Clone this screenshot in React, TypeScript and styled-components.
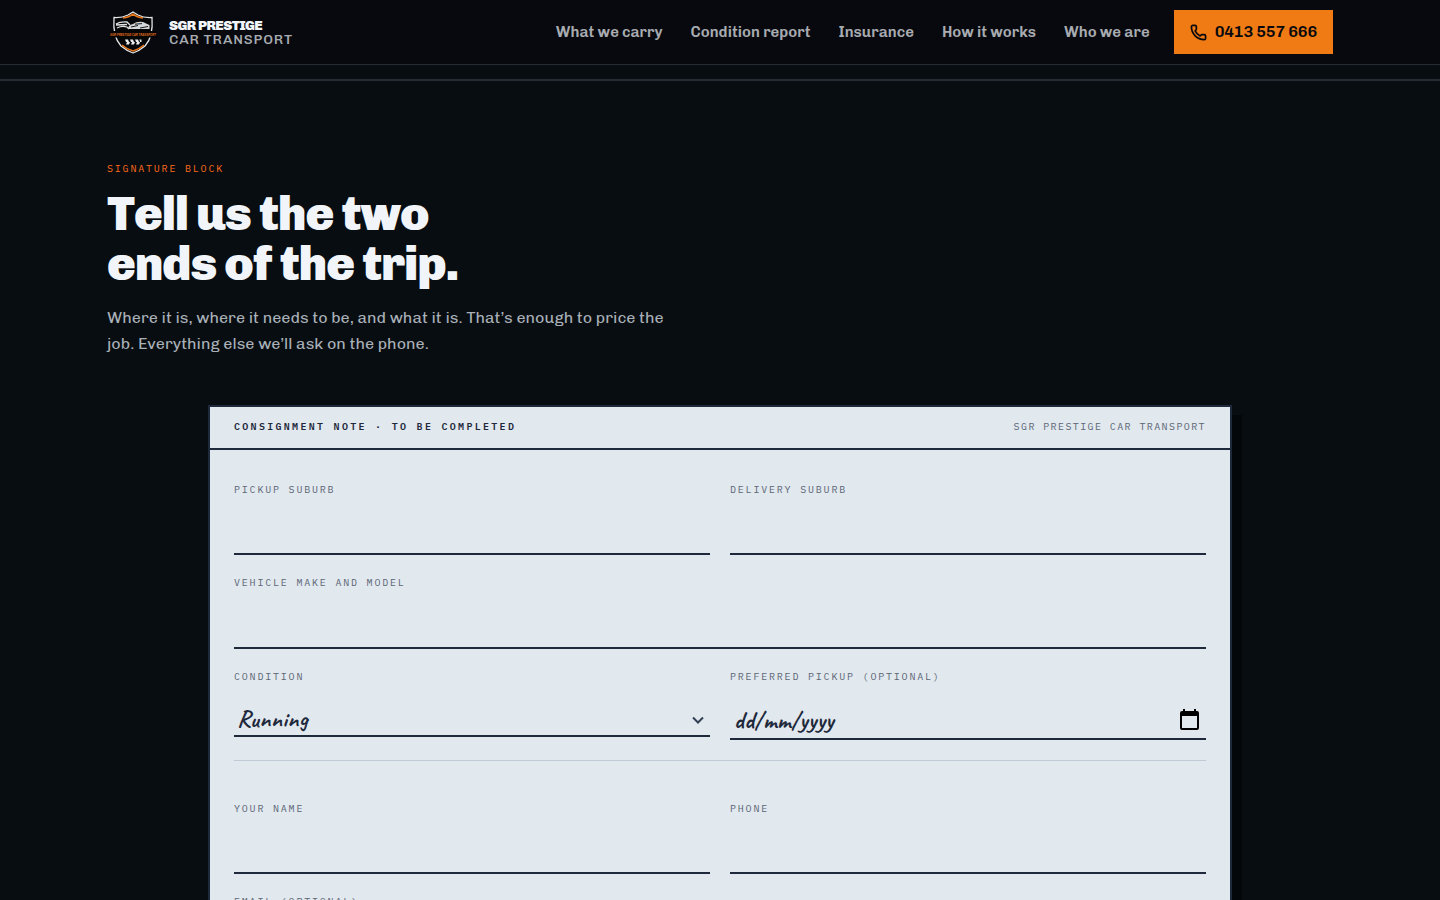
import React from "react";
import styled, { createGlobalStyle, css } from "styled-components";
import { Phone } from "lucide-react";

const colors = {
  ink: "#1e293b",
  header: "#07090e",
  page: "#080d11",
  rule: "#262c34",
  paper: "#e1e8ee",
  orange: "#f07a13",
  light: "#f1f5f9",
  muted: "#a8abb0",
};

const sans = `Chivo, Inter, "Liberation Sans", sans-serif`;
const mono = `"IBM Plex Mono", "Liberation Mono", monospace`;
const hand = `Caveat, Lato, "Liberation Sans", sans-serif`;

const GlobalStyle = createGlobalStyle`
  *, *::before, *::after { box-sizing: border-box; }
  html { scrollbar-width: none; }
  body {
    margin: 0;
    background: ${colors.page};
    color: ${colors.light};
    font-family: ${sans};
    font-size: 16px;
  }
`;

const Page = styled.div`
  min-height: 100vh;
`;

const Header = styled.header`
  position: sticky;
  top: 0;
  z-index: 10;
  background: ${colors.header};
  border-bottom: 1px solid ${colors.rule};
`;

const Container = styled.div`
  width: 100%;
  max-width: 1274px;
  margin: 0 auto;
  padding: 0 24px;
`;

const Bar = styled(Container)`
  display: flex;
  align-items: center;
  justify-content: space-between;
  height: 64px;
`;

const Brand = styled.a`
  display: flex;
  align-items: center;
  gap: 10px;
  text-decoration: none;
`;

const BrandText = styled.span`
  display: flex;
  flex-direction: column;
  padding-top: 1px;
  line-height: 14px;
`;

const BrandName = styled.span`
  color: ${colors.light};
  font-size: 14px;
  font-weight: 900;
  letter-spacing: -0.04em;
`;

const BrandSub = styled.span`
  color: ${colors.muted};
  font-size: 14px;
  font-weight: 500;
  letter-spacing: 0.06em;
`;

const Nav = styled.nav`
  display: flex;
  align-items: center;
  gap: 28px;
`;

const NavLink = styled.a`
  color: ${colors.muted};
  font-size: 15px;
  font-weight: 600;
  text-decoration: none;
`;

const Actions = styled.div`
  display: flex;
  align-items: center;
  gap: 24px;
`;

const CallButton = styled.a`
  display: flex;
  align-items: center;
  gap: 8px;
  height: 44px;
  padding: 0 16px;
  background: ${colors.orange};
  color: ${colors.header};
  font-size: 16px;
  font-weight: 600;
  line-height: 24px;
  letter-spacing: -0.015em;
  text-decoration: none;
`;

const Divider = styled.div`
  height: 16px;
  border-bottom: 2px solid ${colors.rule};
`;

const Section = styled.section`
  padding: 80px 0;
`;

const Eyebrow = styled.p`
  margin: 0;
  color: #ff6a1a;
  font-family: ${mono};
  font-size: 10px;
  line-height: 16px;
  letter-spacing: 0.18em;
  text-transform: uppercase;
`;

const Title = styled.h2`
  margin: 12px 0 0;
  font-size: 48px;
  font-weight: 900;
  line-height: 50px;
  letter-spacing: -0.024em;
`;

const Lead = styled.p`
  margin: 16px 0 0;
  max-width: 580px;
  color: #a9b0b8;
  font-size: 16px;
  line-height: 26px;
`;

const Note = styled.form`
  max-width: 1024px;
  margin: 48px auto 0;
  background: ${colors.paper};
  border: 2px solid ${colors.ink};
  box-shadow: 10px 10px 0 rgba(0, 0, 0, 0.4);
  color: ${colors.ink};
`;

const NoteHeader = styled.div`
  display: flex;
  align-items: center;
  justify-content: space-between;
  height: 43px;
  padding: 0 24px 2px;
  border-bottom: 2px solid ${colors.ink};
  font-family: ${mono};
  font-size: 10px;
`;

const NoteTitle = styled.strong`
  font-weight: 600;
  letter-spacing: 0.23em;
`;

const NoteOwner = styled.span`
  color: #5b6675;
  letter-spacing: 0.14em;
`;

const NoteBody = styled.div`
  padding: 32px 24px;
`;

const Fields = styled.div<{ $ruled?: boolean }>`
  display: grid;
  grid-template-columns: 1fr 1fr;
  gap: 20px;
  align-items: start;
  ${(p) =>
    p.$ruled &&
    css`
      margin-top: 20px;
      padding-top: 40px;
      border-top: 1px solid #bfcad4;
    `}
`;

const Label = styled.label`
  color: #5b6675;
  font-family: ${mono};
  font-size: 10px;
  line-height: 16px;
  letter-spacing: 0.18em;
  text-transform: uppercase;
`;

const control = css`
  width: 100%;
  margin: 0;
  border: 0;
  border-bottom: 2px solid ${colors.ink};
  border-radius: 0;
  background: transparent;
  color: ${colors.ink};
  font-family: ${hand};
  font-size: 24px;
  font-weight: 600;
  letter-spacing: 0.02em;
  outline: none;
`;

const Input = styled.input`
  ${control}
  height: 57px;
  padding: 16px 4px 0;
`;

const Field = styled.div<{ $wide?: boolean }>`
  display: flex;
  flex-direction: column;
  grid-column: ${(p) => (p.$wide ? "1 / -1" : "auto")};

  > ${Input} {
    height: ${(p) => (p.$wide ? 58 : 57)}px;
  }
`;

const ControlWrap = styled.div`
  position: relative;
`;

const Select = styled.select`
  ${control}
  appearance: none;
  display: block;
  height: 52px;
  padding: 18px 32px 0 3px;
`;

const DateInput = styled.input`
  ${control}
  display: block;
  height: 55px;
  padding: 16px 40px 0 4px;

  &::placeholder {
    color: ${colors.ink};
    opacity: 1;
  }
`;

const Chevron = styled.svg`
  position: absolute;
  right: 6px;
  bottom: 11px;
  width: 12px;
  height: 12px;
  pointer-events: none;
`;

const DateButton = styled.button`
  position: absolute;
  right: 6px;
  bottom: 9px;
  display: flex;
  padding: 0;
  border: 0;
  background: none;
`;

const Crest = () => (
  <svg width="52" height="44" viewBox="0 0 52 44" aria-hidden="true">
    <path
      d="M26 2 L31 5 Q37 8 45 7.500 Q46.500 27 38 36 Q32 41 26 43 Q20 41 14 36 Q5.500 27 7 7.500 Q15 8 21 5 Z"
      fill="#050607"
      stroke="#e4e6e8"
      strokeWidth="1.300"
    />
    <path d="M16 8 Q22 7.500 26 4.200 Q30 7.500 36 8" fill="none" stroke="#e87618" strokeWidth="1.500" />
    <path d="M15 35 Q20 39.500 26 41 Q32 39.500 37 35" fill="none" stroke="#e87618" strokeWidth="1.600" />
    <path
      d="M9 14 Q13 11.500 20 12 L23 15 M9 15 L20 14.500 M10 18 Q15 15.500 20 17 L22 19"
      fill="none"
      stroke="#dfe1e3"
      strokeWidth="1.300"
    />
    <path d="M21 19 Q21 15 26 14 Q30 11 36 12 Q40 14 42.500 15 L42.500 19 Z" fill="#d4d7da" />
    <path d="M24 17 L31 15.500 M28 14.200 L35 13.600 M33 18 L41 16.500" stroke="#15181b" strokeWidth="1" />
    <rect x="2" y="21" width="48" height="6.500" rx="1" fill="#050607" />
    <text
      x="26"
      y="25.500"
      textAnchor="middle"
      fill="#e56f1b"
      fontFamily="Liberation Sans Narrow, Liberation Sans, sans-serif"
      fontSize="2.800"
      fontWeight="700"
      fontStyle="italic"
    >
      SGR PRESTIGE CAR TRANSPORT
    </text>
    <path
      d="M18 29.500 h3 l1 2.500 h-3z M23 29.500 h3 l1 2.500 h-3z M28 29.500 h3 l1 2.500 h-3z M32.500 29.500 h2 l0 2.500 h-1.500z M20 32 h3 l-1 2.500 h-3z M25 32 h3 l-1 2.500 h-3z M30 32 h3 l-1 2.500 h-3z"
      fill="#e8eaec"
    />
  </svg>
);

const navItems = ["What we carry", "Condition report", "Insurance", "How it works", "Who we are"];

export default function App() {
  return (
    <Page>
      <GlobalStyle />
      <Header>
        <Bar>
          <Brand href="#top">
            <Crest />
            <BrandText>
              <BrandName>SGR PRESTIGE</BrandName>
              <BrandSub>CAR TRANSPORT</BrandSub>
            </BrandText>
          </Brand>
          <Actions>
            <Nav>
              {navItems.map((item) => (
                <NavLink key={item} href="#section">
                  {item}
                </NavLink>
              ))}
            </Nav>
            <CallButton href="tel:0413557666">
              <Phone size={17} strokeWidth={2.4} aria-hidden="true" />
              0413 557 666
            </CallButton>
          </Actions>
        </Bar>
      </Header>
      <main>
        <Divider />
        <Section>
          <Container>
            <Eyebrow>Signature block</Eyebrow>
            <Title>
              Tell us the two
              <br />
              ends of the trip.
            </Title>
            <Lead>
              Where it is, where it needs to be, and what it is. That’s enough to price the job.
              Everything else we’ll ask on the phone.
            </Lead>
            <Note>
              <NoteHeader>
                <NoteTitle>CONSIGNMENT NOTE · TO BE COMPLETED</NoteTitle>
                <NoteOwner>SGR PRESTIGE CAR TRANSPORT</NoteOwner>
              </NoteHeader>
              <NoteBody>
                <Fields>
                  <Field>
                    <Label htmlFor="pickup">Pickup suburb</Label>
                    <Input id="pickup" type="text" />
                  </Field>
                  <Field>
                    <Label htmlFor="delivery">Delivery suburb</Label>
                    <Input id="delivery" type="text" />
                  </Field>
                  <Field $wide>
                    <Label htmlFor="vehicle">Vehicle make and model</Label>
                    <Input id="vehicle" type="text" />
                  </Field>
                  <Field>
                    <Label htmlFor="condition">Condition</Label>
                    <ControlWrap>
                      <Select id="condition" defaultValue="Running">
                        <option>Running</option>
                        <option>Not running</option>
                      </Select>
                      <Chevron viewBox="0 0 12 12" aria-hidden="true">
                        <path d="M1 3.500 L6 8.500 L11 3.500" fill="none" stroke="#334155" strokeWidth="2" />
                      </Chevron>
                    </ControlWrap>
                  </Field>
                  <Field>
                    <Label htmlFor="date">Preferred pickup (optional)</Label>
                    <ControlWrap>
                      <DateInput id="date" type="text" placeholder="dd/mm/yyyy" />
                      <DateButton type="button" aria-label="Open calendar">
                        <svg width="21" height="22" viewBox="0 0 21 22" aria-hidden="true">
                          <path
                            fillRule="evenodd"
                            d="M4 0h2v2h9V0h2v2h1a2 2 0 0 1 2 2v15a2 2 0 0 1-2 2H3a2 2 0 0 1-2-2V4a2 2 0 0 1 2-2h1z M3 7v12h15V7z"
                            fill="#000"
                          />
                        </svg>
                      </DateButton>
                    </ControlWrap>
                  </Field>
                </Fields>
                <Fields $ruled>
                  <Field>
                    <Label htmlFor="name">Your name</Label>
                    <Input id="name" type="text" />
                  </Field>
                  <Field>
                    <Label htmlFor="phone">Phone</Label>
                    <Input id="phone" type="tel" />
                  </Field>
                  <Field $wide>
                    <Label htmlFor="email">Email (optional)</Label>
                    <Input id="email" type="email" />
                  </Field>
                </Fields>
              </NoteBody>
            </Note>
          </Container>
        </Section>
      </main>
    </Page>
  );
}
